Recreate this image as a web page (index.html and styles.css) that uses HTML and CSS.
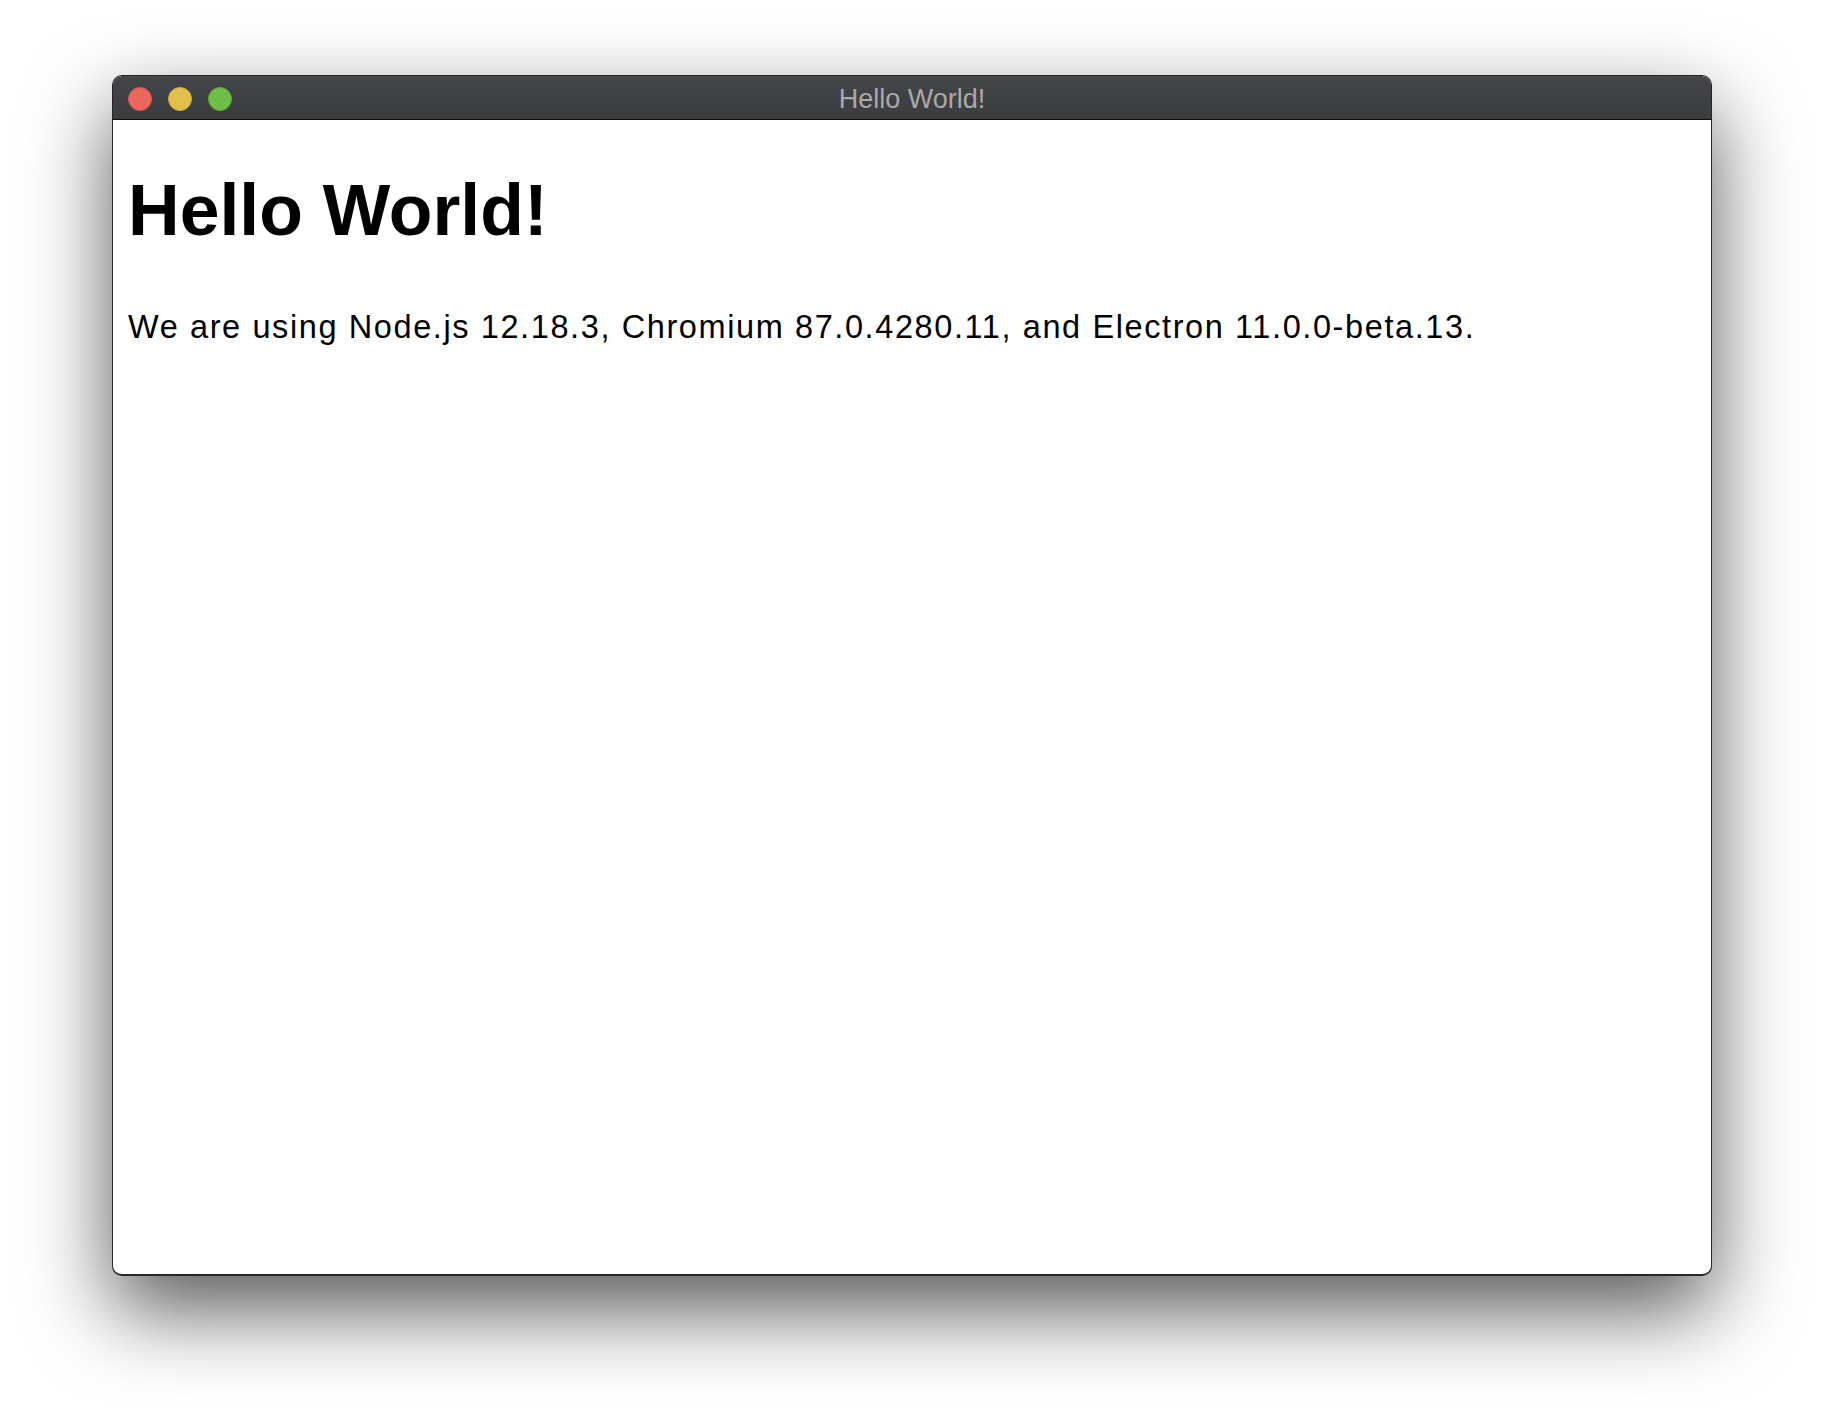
FILE: index.html
```html
<!DOCTYPE html>
<html lang="en">
<head>
<meta charset="utf-8">
<title>Hello World!</title>
<link rel="stylesheet" href="styles.css">
</head>
<body>
<div class="stage">
  <div class="window">
    <div class="titlebar">
      <div class="lights">
        <span class="light close"></span>
        <span class="light min"></span>
        <span class="light max"></span>
      </div>
      <div class="title">Hello World!</div>
      <div class="spacer"></div>
    </div>
    <div class="content">
      <h1 class="heading">Hello World!</h1>
      <p class="info">We are using Node.js 12.18.3, Chromium 87.0.4280.11, and Electron 11.0.0-beta.13.</p>
    </div>
  </div>
</div>
</body>
</html>
```

FILE: styles.css
```css
html, body {
  margin: 0;
  padding: 0;
  background: #ffffff;
}

.stage {
  width: 1824px;
  height: 1424px;
  box-sizing: border-box;
  padding: 75px 112px 0 112px;
  background: #ffffff;
  overflow: hidden;
}

.window {
  width: 1600px;
  height: 1201px;
  box-sizing: border-box;
  border: 1px solid rgba(0, 0, 0, 0.85);
  border-bottom-width: 2px;
  border-radius: 10px;
  background: #ffffff;
  overflow: hidden;
  box-shadow: 0 34px 84px rgba(0, 0, 0, 0.66);
  display: flex;
  flex-direction: column;
}

.titlebar {
  height: 43px;
  flex: 0 0 43px;
  display: grid;
  grid-template-columns: 1fr auto 1fr;
  align-items: center;
  background: linear-gradient(to bottom, #4a4b4e 0px, #434447 3px, #3c3d40 100%);
  border-bottom: 1px solid #0c0c0c;
}

.lights {
  display: flex;
  align-items: center;
  gap: 16px;
  padding-left: 15px;
  padding-top: 1px;
}

.light {
  width: 24px;
  height: 24px;
  border-radius: 50%;
  box-sizing: border-box;
  display: block;
}

.close { background: #ec675b; border: 1px solid #d8544a; }
.min   { background: #e2c04c; border: 1px solid #d0ab3d; }
.max   { background: #6dbf47; border: 1px solid #5aa938; }

.title {
  font-family: "Liberation Sans", Arial, sans-serif;
  font-size: 27px;
  line-height: 43px;
  color: #a9a9aa;
  padding-top: 2px;
}

.content {
  flex: 1;
  padding: 0 15px;
  font-family: "Liberation Sans", Arial, sans-serif;
  color: #000000;
}

.heading {
  margin: 55px 0 0 0;
  font-size: 71.5px;
  line-height: 71.5px;
  font-weight: bold;
  letter-spacing: 0;
}

.info {
  margin: 64px 0 0 0;
  font-size: 32.5px;
  line-height: 32.5px;
  letter-spacing: 1.6px;
  font-weight: normal;
}
```
